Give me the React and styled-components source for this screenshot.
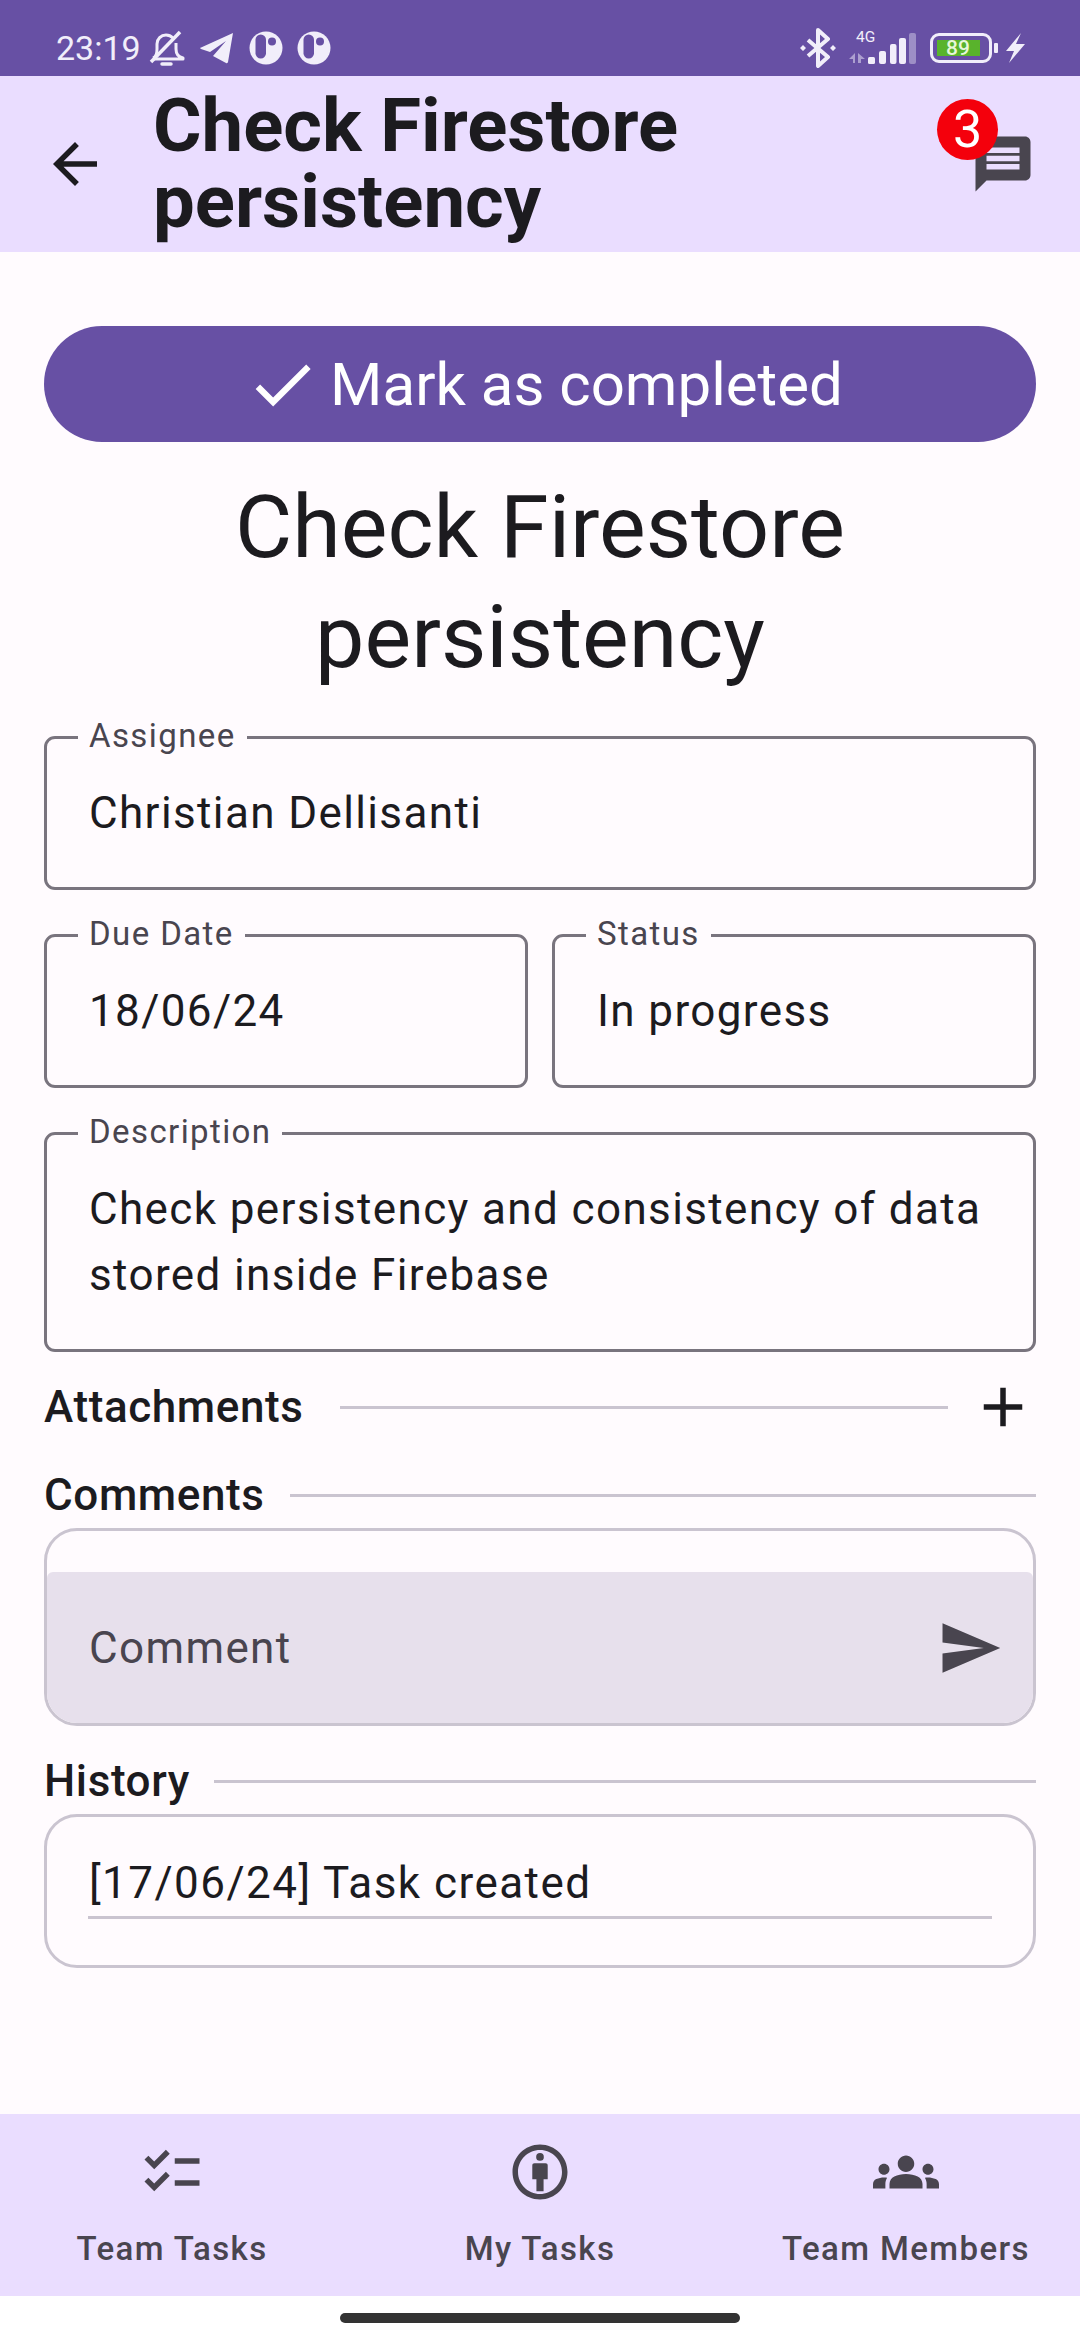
import React from 'react';
import styled, { createGlobalStyle } from 'styled-components';

const Global = createGlobalStyle`
  html, body { margin: 0; padding: 0; background: #fff; }
  * { box-sizing: border-box; }
  body { font-family: Roboto, "Noto Sans", sans-serif; }
`;

const Page = styled.div`
  width: 1080px;
  height: 2340px;
  display: flex;
  flex-direction: column;
  background: #fffbfe;
  color: #1c1b1f;
  overflow: hidden;
`;

const StatusBar = styled.div`
  height: 76px;
  flex: none;
  background: #6750a4;
  color: #f1eefa;
  display: flex;
  align-items: center;
  justify-content: space-between;
  padding: 20px 55px 0 56px;
`;

const StatusGroup = styled.div`
  display: flex;
  align-items: center;
  gap: ${(p) => p.$gap || 0}px;
`;

const Clock = styled.span`
  font-size: 34px;
  line-height: 40px;
  margin-right: 8px;
`;

const TopBar = styled.header`
  height: 176px;
  flex: none;
  background: #eaddff;
  display: flex;
  align-items: center;
  padding: 0 44px 0 42px;
`;

const BackIcon = styled.svg`
  width: 66px;
  height: 66px;
  flex: none;
  margin-right: 45px;
`;

const TopTitle = styled.h1`
  flex: 1;
  margin: 0;
  font-size: 74.3px;
  line-height: 76px;
  font-weight: 700;
  color: #1c1b1f;
`;

const ChatWrap = styled.div`
  position: relative;
  width: 66px;
  height: 66px;
`;

const Badge = styled.span`
  position: absolute;
  left: -33px;
  top: -32px;
  width: 61px;
  height: 61px;
  border-radius: 50%;
  background: #f4000c;
  color: #fff;
  font-size: 52px;
  line-height: 61px;
  text-align: center;
`;

const Content = styled.main`
  flex: 1;
  display: flex;
  flex-direction: column;
  padding: 74px 44px 0;
`;

const CompleteButton = styled.button`
  height: 116px;
  flex: none;
  border: 0;
  border-radius: 58px;
  background: #6750a4;
  color: #fff;
  display: flex;
  align-items: center;
  justify-content: center;
  gap: 10px;
  font-family: inherit;
  font-size: 60px;
  padding: 0 0 0 8px;
`;

const BigTitle = styled.h2`
  margin: 30px 0 0;
  font-size: 88px;
  line-height: 110px;
  font-weight: 400;
  text-align: center;
  color: #1c1b1f;
`;

const Field = styled.fieldset`
  margin: 0;
  padding: 0 0 0 32px;
  min-width: 0;
  flex: 1;
  height: ${(p) => p.$h}px;
  border: 3px solid #79747e;
  border-radius: 11px;
`;

const FieldLabel = styled.legend`
  padding: 0 11px;
  margin-left: -1px;
  font-size: 33px;
  line-height: 29px;
  letter-spacing: 1.4px;
  color: #49454f;
  height: 33px;
`;

const FieldValue = styled.div`
  font-size: 44px;
  line-height: 66px;
  letter-spacing: 1.375px;
  color: #1c1b1f;
  margin: 26px 0 0 10px;
  padding-right: 30px;
`;

const FieldRow = styled.div`
  display: flex;
  gap: 24px;
  margin-top: 29px;
`;

const SectionRow = styled.div`
  display: flex;
  align-items: center;
  height: 60px;
  margin-top: ${(p) => p.$mt}px;
`;

const SectionLabel = styled.span`
  font-size: 44px;
  line-height: 60px;
  font-weight: 500;
  letter-spacing: 0.6px;
  color: #1c1b1f;
`;

const Rule = styled.div`
  flex: 1;
  height: 3px;
  background: #cac4d0;
  margin-left: ${(p) => p.$ml}px;
  margin-right: ${(p) => p.$mr || 0}px;
`;

const PlusIcon = styled.svg`
  width: 66px;
  height: 66px;
  flex: none;
`;

const Card = styled.div`
  border: 3px solid #cac4d0;
  border-radius: 33px;
  height: ${(p) => p.$h}px;
  overflow: hidden;
  margin-top: 3px;
  background: #fffbfe;
`;

const CommentInput = styled.div`
  margin-top: 41px;
  height: 151px;
  background: #e7e0ec;
  border-radius: 6px 6px 0 0;
  display: flex;
  align-items: center;
  justify-content: space-between;
  padding: 0 30px 0 42px;
  font-size: 44px;
  letter-spacing: 1.375px;
  color: #49454f;
`;

const HistoryLine = styled.div`
  margin: 40px 41px 0 41px;
  height: 62px;
  border-bottom: 3px solid #cac4d0;
  padding-left: 1px;
  font-size: 44px;
  line-height: 52px;
  letter-spacing: 1.45px;
  color: #1c1b1f;
`;

const BottomNav = styled.nav`
  margin-top: auto;
  height: 182px;
  flex: none;
  background: #eaddff;
  display: grid;
  grid-template-columns: 344px 344px 340px;
  column-gap: 24px;
`;

const NavItem = styled.div`
  display: flex;
  flex-direction: column;
  align-items: center;
  padding-top: 25px;
  color: #49454f;
`;

const NavIconBox = styled.div`
  height: 66px;
  display: flex;
  align-items: center;
  justify-content: center;
`;

const NavLabel = styled.span`
  margin-top: 22px;
  font-size: 33px;
  line-height: 44px;
  font-weight: 500;
  letter-spacing: 1.4px;
  white-space: nowrap;
`;

const GestureArea = styled.div`
  height: 44px;
  flex: none;
  background: #fff;
  display: flex;
  justify-content: center;
  padding-top: 17px;
`;

const GestureBar = styled.div`
  width: 400px;
  height: 10px;
  border-radius: 5px;
  background: #333;
`;

const SignalGroup = styled.div`
  position: relative;
  width: 68px;
  height: 34px;
  margin-left: 13px;
`;

const NetLabel = styled.span`
  position: absolute;
  left: 7px;
  top: -1px;
  font-size: 15.5px;
  line-height: 14px;
`;

const Battery = styled.div`
  width: 62px;
  height: 30px;
  margin-left: 13px;
  border: 3.5px solid #f1eefa;
  border-radius: 9px;
  padding: 3.5px;
  display: flex;
`;

const BatteryFill = styled.div`
  width: 43px;
  height: 16px;
  background: #59b32c;
  color: #e7f7d9;
  font-size: 21px;
  line-height: 17px;
  font-weight: 500;
  text-align: center;
`;

const BatteryCap = styled.div`
  width: 4px;
  height: 10px;
  margin: 0 8px 0 2px;
  border-radius: 1px;
  background: #f1eefa;
`;

const BellOff = () => (
  <svg width="36" height="37" viewBox="0 0 36 37" fill="none" stroke="#f1eefa" strokeWidth="3">
    <path d="M4 28c3-1 4-4 4-9V14c0-5 4-9 9-9 3 0 5 1 7 3M27 13v6c0 5 2 8 7 9v1H4" strokeLinejoin="round" />
    <path d="M13 34h9" strokeLinecap="round" strokeWidth="3.500" />
    <path d="M2 32 31 2" strokeWidth="3.500" />
  </svg>
);

const Telegram = () => (
  <svg width="36" height="32" viewBox="0 0 36 32" fill="#f1eefa">
    <path d="M1 16 34 1 29 30c-.2 1-1 1.500-2 1l-13-7 13-15-16 11-9-3c-1-.5-1-1.500-1-2z" />
  </svg>
);

const Pill = () => (
  <svg width="34" height="34" viewBox="0 0 34 34">
    <circle cx="17" cy="17" r="16.500" fill="#f1eefa" />
    <rect x="6.500" y="3.500" width="10.500" height="24" rx="5.250" fill="#6750a4" />
    <circle cx="23" cy="10.500" r="4" fill="#6750a4" />
  </svg>
);

const Bluetooth = () => (
  <svg width="36" height="40" viewBox="0 0 36 40" fill="none" stroke="#f1eefa" strokeWidth="4">
    <path d="M8 12 28 29 18 38V2l10 9L8 28" strokeLinejoin="round" />
    <path d="M3 17l3 3-3 3-3-3zM33 17l3 3-3 3-3-3z" fill="#f1eefa" stroke="none" />
  </svg>
);

const Signal = () => (
  <svg width="68" height="34" viewBox="0 0 68 34" fill="#f1eefa">
    <path d="M0 28 6 22v10H4v-4zM9 22l7 6h-4v4H9z" opacity=".5" />
    <rect x="19" y="26" width="7" height="7" rx="1.500" />
    <rect x="30" y="20" width="7" height="13" rx="2" />
    <rect x="41" y="13" width="6.500" height="20" rx="2" />
    <rect x="50" y="7" width="7" height="26" rx="2" />
    <rect x="60" y="2" width="7" height="31" rx="2" opacity=".4" />
  </svg>
);

const Bolt = () => (
  <svg width="19" height="30" viewBox="0 0 19 30" fill="#f1eefa">
    <path d="M15 0 0 18h8L3 30 19 11h-9z" />
  </svg>
);

const Check = () => (
  <svg width="75" height="75" viewBox="0 0 24 24" fill="#fff">
    <path d="M9 16.170 4.830 12l-1.420 1.410L9 19 21 7l-1.410-1.410z" />
  </svg>
);

const Chat = () => (
  <svg width="66" height="66" viewBox="0 0 24 24" fill="#49454f">
    <path d="M20 2H4c-1.100 0-2 .9-2 2v18l4-4h14c1.100 0 2-.9 2-2V4c0-1.100-.9-2-2-2zm-2 12H6v-2h12v2zm0-3H6V9h12v2zm0-3H6V6h12v2z" />
  </svg>
);

const Send = () => (
  <svg width="66" height="66" viewBox="0 0 24 24" fill="#49454f">
    <path d="M2.010 21 23 12 2.010 3 2 10l15 2-15 2z" />
  </svg>
);

const Checklist = () => (
  <svg width="66" height="66" viewBox="0 0 24 24" fill="#49454f">
    <path d="M22 7h-9v2h9V7zm0 8h-9v2h9v-2zM5.540 11 2 7.460l1.410-1.410 2.120 2.120 4.240-4.240 1.410 1.410L5.540 11zm0 8L2 15.460l1.410-1.410 2.120 2.120 4.240-4.240 1.410 1.410L5.540 19z" />
  </svg>
);

const Person = () => (
  <svg width="66" height="66" viewBox="0 0 24 24" fill="#49454f">
    <path d="M12 2C6.480 2 2 6.480 2 12s4.480 10 10 10 10-4.480 10-10S17.520 2 12 2zm0 18c-4.410 0-8-3.590-8-8s3.590-8 8-8 8 3.590 8 8-3.590 8-8 8z" />
    <circle cx="12" cy="6.500" r="1.400" />
    <path d="M9.200 9.600c0-.5.300-.8.800-.8h4c.5 0 .8.300.8.800v5h-1.500V19h-2.600v-4.400H9.200z" />
  </svg>
);

const Groups = () => (
  <svg width="66" height="66" viewBox="0 0 24 24" fill="#49454f">
    <path d="M12 12.750c1.630 0 3.070.390 4.240.900 1.080.480 1.760 1.560 1.760 2.730V18H6v-1.610c0-1.180.680-2.260 1.760-2.730 1.170-.520 2.610-.910 4.240-.910zM4 13c1.100 0 2-.900 2-2s-.900-2-2-2-2 .900-2 2 .900 2 2 2zm1.130 1.100C4.760 14.040 4.390 14 4 14c-.990 0-1.930.210-2.780.580C.480 14.900 0 15.620 0 16.430V18h4.500v-1.610c0-.830.230-1.610.630-2.290zM20 13c1.100 0 2-.900 2-2s-.900-2-2-2-2 .900-2 2 .900 2 2 2zm4 3.430c0-.810-.480-1.530-1.220-1.850C21.930 14.210 20.990 14 20 14c-.390 0-.760.040-1.130.100.400.680.630 1.460.630 2.290V18H24v-1.570zM12 6c1.660 0 3 1.340 3 3s-1.340 3-3 3-3-1.340-3-3 1.340-3 3-3z" />
  </svg>
);

const navItems = [
  { label: 'Team Tasks', icon: <Checklist /> },
  { label: 'My Tasks', icon: <Person /> },
  { label: 'Team Members', icon: <Groups /> },
];

export default function App() {
  return (
    <Page>
      <Global />
      <StatusBar>
        <StatusGroup>
          <Clock>23:19</Clock>
          <StatusGroup $gap={14}>
            <BellOff />
            <Telegram />
            <Pill />
            <Pill />
          </StatusGroup>
        </StatusGroup>
        <StatusGroup>
          <Bluetooth />
          <SignalGroup>
            <NetLabel>4G</NetLabel>
            <Signal />
          </SignalGroup>
          <Battery>
            <BatteryFill>89</BatteryFill>
          </Battery>
          <BatteryCap />
          <Bolt />
        </StatusGroup>
      </StatusBar>
      <TopBar>
        <BackIcon viewBox="0 0 24 24" fill="#1c1b1f">
          <path d="M20 11H7.830l5.590-5.590L12 4l-8 8 8 8 1.410-1.410L7.830 13H20z" />
        </BackIcon>
        <TopTitle>Check Firestore<br />persistency</TopTitle>
        <ChatWrap>
          <Chat />
          <Badge>3</Badge>
        </ChatWrap>
      </TopBar>
      <Content>
        <CompleteButton>
          <Check />
          Mark as completed
        </CompleteButton>
        <BigTitle>Check Firestore<br />persistency</BigTitle>
        <FieldRow>
          <Field $h={169}>
            <FieldLabel>Assignee</FieldLabel>
            <FieldValue>Christian Dellisanti</FieldValue>
          </Field>
        </FieldRow>
        <FieldRow>
          <Field $h={169}>
            <FieldLabel>Due Date</FieldLabel>
            <FieldValue>18/06/24</FieldValue>
          </Field>
          <Field $h={169}>
            <FieldLabel>Status</FieldLabel>
            <FieldValue>In progress</FieldValue>
          </Field>
        </FieldRow>
        <FieldRow>
          <Field $h={235}>
            <FieldLabel>Description</FieldLabel>
            <FieldValue>Check persistency and consistency of data stored inside Firebase</FieldValue>
          </Field>
        </FieldRow>
        <SectionRow $mt={25}>
          <SectionLabel>Attachments</SectionLabel>
          <Rule $ml={36} $mr={22} />
          <PlusIcon viewBox="0 0 24 24" fill="#1c1b1f">
            <path d="M19 13h-6v6h-2v-6H5v-2h6V5h2v6h6v2z" />
          </PlusIcon>
        </SectionRow>
        <SectionRow $mt={28}>
          <SectionLabel>Comments</SectionLabel>
          <Rule $ml={25} />
        </SectionRow>
        <Card $h={198}>
          <CommentInput>
            Comment
            <Send />
          </CommentInput>
        </Card>
        <SectionRow $mt={25}>
          <SectionLabel>History</SectionLabel>
          <Rule $ml={24} />
        </SectionRow>
        <Card $h={154}>
          <HistoryLine>[17/06/24] Task created</HistoryLine>
        </Card>
      </Content>
      <BottomNav>
        {navItems.map((item) => (
          <NavItem key={item.label}>
            <NavIconBox>{item.icon}</NavIconBox>
            <NavLabel>{item.label}</NavLabel>
          </NavItem>
        ))}
      </BottomNav>
      <GestureArea>
        <GestureBar />
      </GestureArea>
    </Page>
  );
}
